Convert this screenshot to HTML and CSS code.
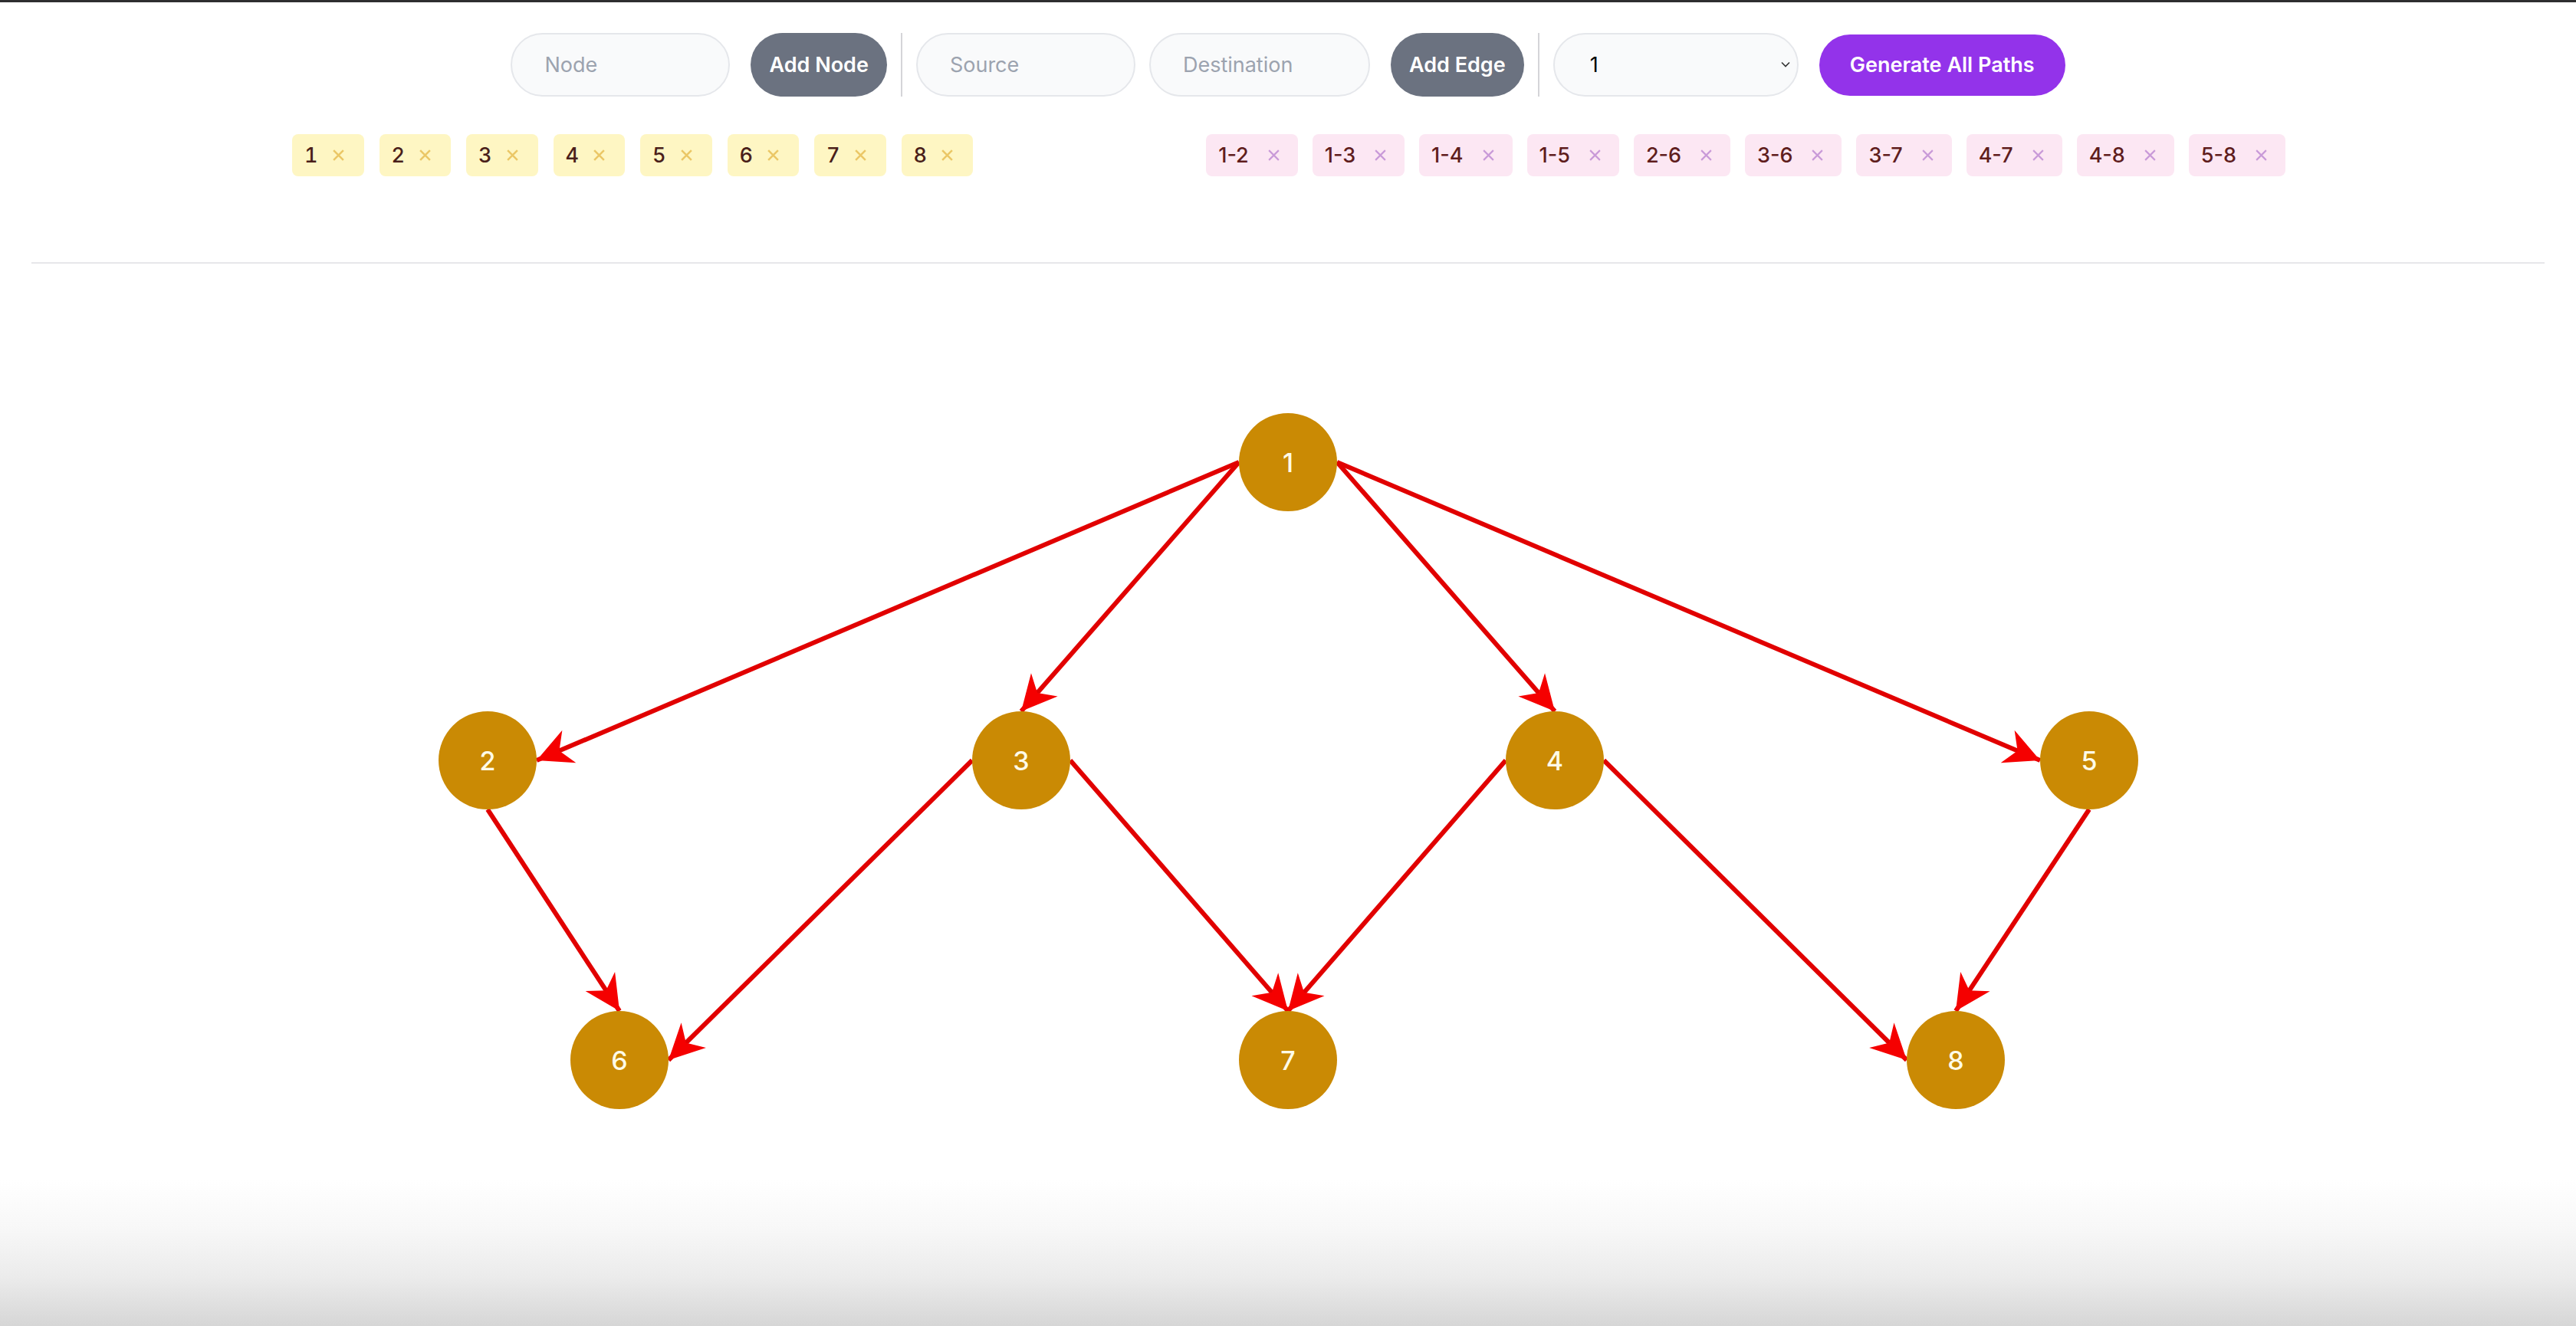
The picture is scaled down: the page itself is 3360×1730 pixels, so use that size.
FILE: index.html
```html
<!DOCTYPE html>
<html>
<head>
    <title>All Paths</title>
    <link rel="stylesheet" href="styles.css">
</head>
<body>
    <div class="topline"></div>
    <main class="page">
        <div class="toolbar">
            <input class="field" type="text" placeholder="Node">
            <button class="btn btn-gray">Add Node</button>
            <span class="divider"></span>
            <input class="field" type="text" placeholder="Source">
            <input class="field" type="text" placeholder="Destination">
            <button class="btn btn-gray">Add Edge</button>
            <span class="divider"></span>
            <div class="select-wrap">
                <select class="field select">
                    <option>1</option>
                    <option>2</option>
                    <option>3</option>
                    <option>4</option>
                    <option>5</option>
                    <option>6</option>
                    <option>7</option>
                    <option>8</option>
                </select>
                <svg class="chevron" viewBox="0 0 12 8"><path d="M1 1.5 L6 6.5 L11 1.5" fill="none" stroke="#333" stroke-width="1.6"/></svg>
            </div>
            <button class="btn btn-purple">Generate All Paths</button>
        </div>

        <div class="chip-rows">
            <div class="chips chips-node">
                <span class="chip chip-node">1<svg class="chip-x" viewBox="0 0 16 16"><path d="M2 2 L14 14 M14 2 L2 14"/></svg></span>
                <span class="chip chip-node">2<svg class="chip-x" viewBox="0 0 16 16"><path d="M2 2 L14 14 M14 2 L2 14"/></svg></span>
                <span class="chip chip-node">3<svg class="chip-x" viewBox="0 0 16 16"><path d="M2 2 L14 14 M14 2 L2 14"/></svg></span>
                <span class="chip chip-node">4<svg class="chip-x" viewBox="0 0 16 16"><path d="M2 2 L14 14 M14 2 L2 14"/></svg></span>
                <span class="chip chip-node">5<svg class="chip-x" viewBox="0 0 16 16"><path d="M2 2 L14 14 M14 2 L2 14"/></svg></span>
                <span class="chip chip-node">6<svg class="chip-x" viewBox="0 0 16 16"><path d="M2 2 L14 14 M14 2 L2 14"/></svg></span>
                <span class="chip chip-node">7<svg class="chip-x" viewBox="0 0 16 16"><path d="M2 2 L14 14 M14 2 L2 14"/></svg></span>
                <span class="chip chip-node">8<svg class="chip-x" viewBox="0 0 16 16"><path d="M2 2 L14 14 M14 2 L2 14"/></svg></span>
            </div>
            <div class="chips">
                <span class="chip chip-edge">1-2<svg class="chip-x" viewBox="0 0 16 16"><path d="M2 2 L14 14 M14 2 L2 14"/></svg></span>
                <span class="chip chip-edge">1-3<svg class="chip-x" viewBox="0 0 16 16"><path d="M2 2 L14 14 M14 2 L2 14"/></svg></span>
                <span class="chip chip-edge">1-4<svg class="chip-x" viewBox="0 0 16 16"><path d="M2 2 L14 14 M14 2 L2 14"/></svg></span>
                <span class="chip chip-edge">1-5<svg class="chip-x" viewBox="0 0 16 16"><path d="M2 2 L14 14 M14 2 L2 14"/></svg></span>
                <span class="chip chip-edge">2-6<svg class="chip-x" viewBox="0 0 16 16"><path d="M2 2 L14 14 M14 2 L2 14"/></svg></span>
                <span class="chip chip-edge">3-6<svg class="chip-x" viewBox="0 0 16 16"><path d="M2 2 L14 14 M14 2 L2 14"/></svg></span>
                <span class="chip chip-edge">3-7<svg class="chip-x" viewBox="0 0 16 16"><path d="M2 2 L14 14 M14 2 L2 14"/></svg></span>
                <span class="chip chip-edge">4-7<svg class="chip-x" viewBox="0 0 16 16"><path d="M2 2 L14 14 M14 2 L2 14"/></svg></span>
                <span class="chip chip-edge">4-8<svg class="chip-x" viewBox="0 0 16 16"><path d="M2 2 L14 14 M14 2 L2 14"/></svg></span>
                <span class="chip chip-edge">5-8<svg class="chip-x" viewBox="0 0 16 16"><path d="M2 2 L14 14 M14 2 L2 14"/></svg></span>
            </div>
        </div>

        <hr class="rule">
    </main>

    <!-- graph canvas, coordinates are page pixels -->
    <svg class="graph" viewBox="0 344 3360 1386">
        <defs>
            <marker id="arrow" markerUnits="userSpaceOnUse" viewBox="-50 -26 54 52" markerWidth="54" markerHeight="52" refX="0" refY="0" orient="auto">
                <path d="M0,0 L-46,-23 L-32,0 L-46,23 Z" fill="#f50000"/>
            </marker>
        </defs>
        <g class="edges">
            <line x1="1616" y1="603" x2="700" y2="992"/>
            <line x1="1616" y1="603" x2="1332" y2="928"/>
            <line x1="1744" y1="603" x2="2028" y2="928"/>
            <line x1="1744" y1="603" x2="2661" y2="992"/>
            <line x1="636" y1="1056" x2="808" y2="1319"/>
            <line x1="1268" y1="992" x2="872" y2="1383"/>
            <line x1="1396" y1="992" x2="1680" y2="1319"/>
            <line x1="1964" y1="992" x2="1680" y2="1319"/>
            <line x1="2092" y1="992" x2="2487" y2="1383"/>
            <line x1="2725" y1="1056" x2="2551" y2="1319"/>
        </g>
        <g class="nodes">
            <circle cx="1680" cy="603" r="64"/><text x="1680" y="603">1</text>
            <circle cx="636" cy="992" r="64"/><text x="636" y="992">2</text>
            <circle cx="1332" cy="992" r="64"/><text x="1332" y="992">3</text>
            <circle cx="2028" cy="992" r="64"/><text x="2028" y="992">4</text>
            <circle cx="2725" cy="992" r="64"/><text x="2725" y="992">5</text>
            <circle cx="808" cy="1383" r="64"/><text x="808" y="1383">6</text>
            <circle cx="1680" cy="1383" r="64"/><text x="1680" y="1383">7</text>
            <circle cx="2551" cy="1383" r="64"/><text x="2551" y="1383">8</text>
        </g>
    </svg>
</body>
</html>
```

FILE: styles.css
```css
html, body {
    margin: 0;
    height: 1730px;
    overflow: hidden;
}
body {
    font-family: Inter, "Noto Sans", sans-serif;
    background: linear-gradient(to bottom, #ffffff 0, #ffffff 1540px, #f8f8f8 1600px, #ebebeb 1667px, #e0e0e0 1700px, #d6d6d6 1730px);
}
.topline {
    height: 3px;
    background: #2e2e30;
}
.page {
    padding: 0 41px;
}
.toolbar {
    display: flex;
    justify-content: center;
    align-items: center;
    gap: 18px;
    margin-top: 40px;
    height: 83px;
}
.field {
    box-sizing: border-box;
    width: 286px;
    height: 83px;
    padding: 0 42px;
    border: 2px solid #e5e7eb;
    border-radius: 42px;
    background: #f9fafb;
    font-family: inherit;
    font-size: 27px;
    color: #111;
    outline: none;
}
.field::placeholder {
    color: #9ca3af;
}
.field + .field {
    width: 288px;
}
.divider {
    width: 2px;
    height: 83px;
    background: #d4d4d8;
}
.select-wrap {
    position: relative;
}
.select {
    width: 320px;
    padding: 0 46px;
    appearance: none;
    -webkit-appearance: none;
    color: #000;
}
.chevron {
    position: absolute;
    right: 11px;
    top: 37px;
    width: 12px;
    height: 8px;
    pointer-events: none;
}
.btn {
    height: 83px;
    margin-left: 9px;
    border: none;
    border-radius: 42px;
    font-family: inherit;
    font-size: 27px;
    font-weight: 600;
    color: #fff;
    cursor: pointer;
}
.btn-gray {
    padding: 0 24px;
    background: #6b7280;
}
.btn-purple {
    padding: 0 40px;
    height: 80px;
    background: #9333ea;
}
.chip-rows {
    display: flex;
    justify-content: space-between;
    margin-top: 49px;
    padding: 0 338px 0 340px;
}
.chips {
    display: flex;
    gap: 19px;
}
.chips-node {
    gap: 20px;
}
.chip {
    display: flex;
    align-items: center;
    height: 55px;
    padding: 0 24px 0 16px;
    border-radius: 8px;
    font-size: 27px;
    font-weight: 500;
}
.chip-x {
    width: 17px;
    height: 17px;
    margin-left: 18px;
    fill: none;
    stroke-width: 2;
    cursor: pointer;
}
.chip-node {
    background: #fef6c3;
    color: #4a1f1a;
    padding-right: 25px;
    font-variant-numeric: tabular-nums;
}
.chip-node .chip-x {
    stroke: #ebc766;
    stroke-width: 2.4;
}
.chip-edge {
    background: #fce7f3;
    color: #5f1d1d;
    padding-right: 23px;
}
.chip-edge .chip-x {
    margin-left: 24px;
    stroke: #c99ad8;
}
.rule {
    margin: 112px 0 0;
    height: 0;
    border: none;
    border-top: 2px solid #e7e7ea;
}
.graph {
    display: block;
    width: 3360px;
    height: 1386px;
}
.edges line {
    stroke: #e10000;
    stroke-width: 6;
    marker-end: url(#arrow);
}
.nodes circle {
    fill: #ca8a04;
}
.nodes text {
    fill: #fefbe8;
    font-family: Inter, sans-serif;
    font-size: 34px;
    font-weight: 500;
    text-anchor: middle;
    dominant-baseline: central;
}
```
